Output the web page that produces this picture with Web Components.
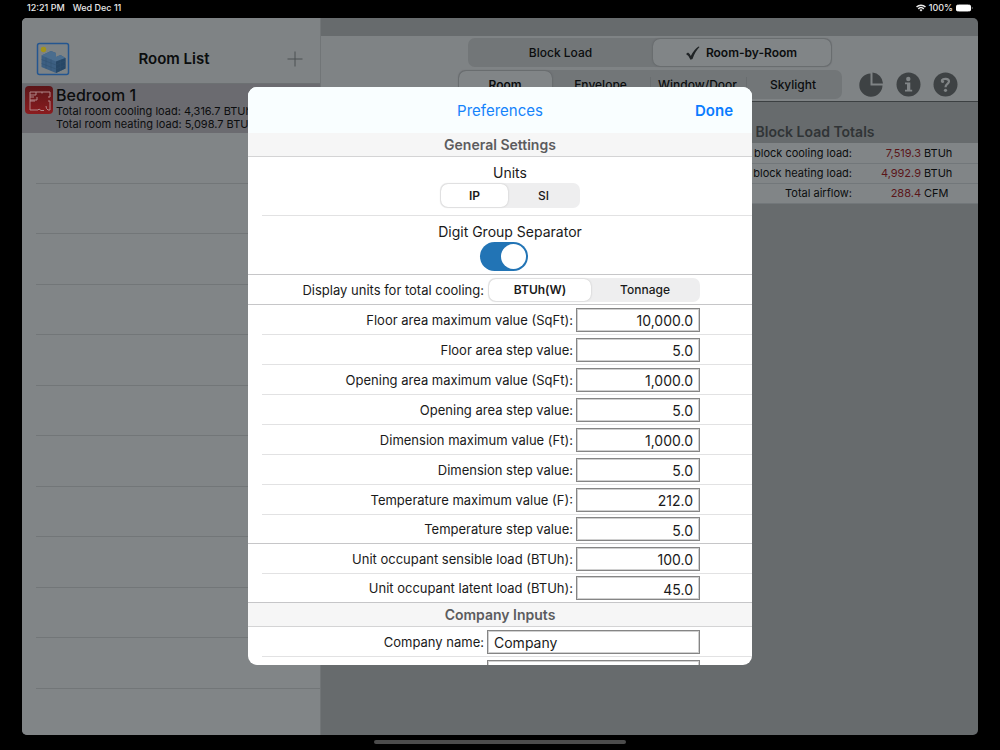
<!DOCTYPE html>
<html lang="en">
<head>
<meta charset="utf-8">
<title>Room List</title>
<style>
html, body { margin: 0; height: 100%; background: #000; }
body { font-family: Inter, "Liberation Sans", sans-serif; color: #0b0d0e; overflow: hidden; }
</style>
</head>
<body>
<load-app></load-app>

<template id="t-app">
<style>
:host { display: grid; grid-template-rows: 18px 1fr 15px; height: 100vh; position: relative; background: #000; }
main { display: grid; grid-template-columns: 299px 1fr; margin: 0 22px; border-radius: 5px; overflow: hidden; background: #676b6d; min-height: 0; }
.scrim { position: absolute; inset: 17px 22px 15px; display: grid; place-items: center; }
.home { width: 252px; height: 4px; border-radius: 2px; background: #4b4b4b; margin: 5px auto 0; }
</style>
<status-bar></status-bar>
<main>
  <room-list>
    <room-row name="Bedroom 1" cooling="4,316.7" heating="5,098.7"></room-row>
  </room-list>
  <detail-pane></detail-pane>
</main>
<div class="home"></div>
<div class="scrim"><prefs-dialog></prefs-dialog></div>
</template>

<template id="t-status">
<style>
:host { display: flex; align-items: center; gap: 8px; padding: 0 27px; color: #e8e8e8; font-size: 9px; font-weight: 500; line-height: 15px; height: 15px; }
.right { margin-left: auto; display: flex; align-items: center; gap: 3px; }
svg { display: block; }
</style>
<span>12:21 PM</span><span>Wed Dec 11</span>
<div class="right">
  <svg width="10" height="8" viewBox="0 0 20 16" fill="none" stroke="#eee" stroke-width="3"><path d="M1 6a13 13 0 0 1 18 0M4.500 9.700a8 8 0 0 1 11 0"/><path d="M10 15l-3-3.200a4.500 4.500 0 0 1 6 0z" fill="#eee" stroke="none"/></svg>
  <span>100%</span>
  <svg width="17" height="8" viewBox="0 0 17 8"><rect x=".5" y=".5" width="14" height="7" rx="2" fill="none" stroke="#777"/><rect x="0" y="1" width="15" height="6" rx="1.500" fill="#fff"/><path d="M15.800 2.800v2.400q1-.4 1-1.200t-1-1.200" fill="#777"/></svg>
</div>
</template>

<template id="t-list">
<style>
:host { display: flex; flex-direction: column; background: #818587; border-right: 1px solid #717577; overflow: hidden; min-height: 0; }
header { flex: none; display: grid; grid-template-columns: 34px 1fr 34px; align-items: end; box-sizing: border-box; height: 66px; padding: 0 8px 6px 14px; background: #7f8385; border-bottom: 1px solid #6c7072; }
h1 { margin: 0; font-size: 15px; line-height: 36px; font-weight: 600; text-align: center; }
button { border: 0; padding: 0; background: none; display: grid; place-items: center; height: 36px; }
svg { display: block; }
ul { list-style: none; margin: 0; padding: 0 0 0 14px; }
li { box-sizing: border-box; height: 50px; border-bottom: 1px solid #727678; }
li:nth-child(odd) { height: 51px; }
</style>
<header>
  <button aria-label="Building">
    <svg width="34" height="34" viewBox="0 0 34 34"><rect x="1.500" y="1.500" width="31" height="31" rx="2" fill="#7d8386" stroke="#245690" stroke-width="1.500"/><circle cx="7.500" cy="7.500" r="2.700" fill="#a29419"/><path d="M5.500 13.500L15 9l5 2v4l4.500-2 5 3v10.500L20 31 5.500 25z" fill="#3c5f82"/><path d="M5.500 13.500L15 9l5 2v4l4.500-2 5 3L20 19.500z" fill="#4a6d8e"/><path d="M20 19.500l9.500-3.500v10.500L20 31z" fill="#274766"/><path d="M5.500 17.500L20 23l9.500-4M5.500 21.500L20 27l9.500-4M10 15.500v11M15 17.500v11M24.500 18v11" stroke="#31506f" stroke-width=".5" fill="none"/></svg>
  </button>
  <h1>Room List</h1>
  <button aria-label="Add room"><svg width="16" height="16" viewBox="0 0 16 16" stroke="#4d5153" stroke-width="1"><path d="M8 .5v15M.5 8h15"/></svg></button>
</header>
<slot></slot>
<ul><li></li><li></li><li></li><li></li><li></li><li></li><li></li><li></li><li></li><li></li><li></li></ul>
</template>

<template id="t-row">
<style>
:host { flex: none; display: flex; gap: 3px; box-sizing: border-box; height: 49px; padding: 2px 0 0 3px; background: #6b6b70; white-space: nowrap; overflow: hidden; }
svg { flex: none; display: block; }
h2 { margin: 0; font-size: 16px; line-height: 19px; font-weight: 500; }
p { margin: 0; font-size: 11px; line-height: 13px; }
</style>
<svg width="28" height="28" viewBox="0 0 28 28"><defs><linearGradient id="g" x2="0" y2="1"><stop stop-color="#5b1518"/><stop offset="1" stop-color="#8b1c1f"/></linearGradient></defs><rect width="28" height="28" rx="4" fill="url(#g)"/><path d="M5 6h6v3H5zM5 9v5h7v-3M11 6h14v5M25 15v9h-2q-2-1-2-4M5 14v10h8l1-1 2 1.500h3M5 15h5M17 6v1.500M5 11h4M25 11h-2M25 15h-2" fill="none" stroke="#b08688" stroke-width="1"/></svg>
<div><h2></h2><p class="c"></p><p class="h"></p></div>
</template>

<template id="t-seg">
<style>
:host { display: block; }
fieldset { border: 0; margin: 0; min-width: 0; box-sizing: border-box; padding: 1px; display: grid; grid-template-columns: var(--cols, 1fr 1fr); height: var(--h, 24px); border-radius: var(--r, 7px); background: var(--track, #eeeeef); font-size: 12px; font-weight: 500; }
label { position: relative; display: flex; gap: 6px; align-items: center; justify-content: center; border-radius: inherit; min-width: 0; white-space: nowrap; }
label.on { background: var(--on, #fff); font-weight: 600; box-shadow: 0 0 2px var(--edge, #bbb); }
label.line::before { content: ""; position: absolute; left: 0; top: 6px; bottom: 6px; width: 1px; background: #696d6f; }
input { appearance: none; position: absolute; inset: 0; margin: 0; }
svg { display: block; }
</style>
<fieldset></fieldset>
</template>

<template id="t-detail">
<style>
:host { display: block; min-width: 0; }
.bar { margin-top: 18px; box-sizing: border-box; height: 66px; padding: 2px 0 0; background: #7f8385; border-bottom: 1px solid #3c4042; display: flex; flex-direction: column; align-items: center; gap: 3px; --track: #727678; --on: #818587; --edge: #515557; --h: 29px; }
.mode { width: 364px; --cols: 184px 1fr; }
.line { align-self: stretch; display: grid; grid-template-columns: 1fr 384px 1fr; }
.tabs { --cols: 93px 98px 96px 1fr; }
.icons { display: flex; align-items: center; justify-content: flex-end; gap: 12px; padding-right: 20px; }
button { border: 0; padding: 0; background: none; width: 25px; height: 25px; }
svg { display: block; }
h2 { margin: 0; padding-top: 18px; line-height: 23px; font-size: 14px; font-weight: 600; color: #303436; text-align: center; padding-left: 331px; }
table { width: 100%; border-collapse: collapse; background: #818587; font-size: 11px; table-layout: fixed; }
th { font-weight: 400; text-align: right; padding: 0; }
td { padding: 0; }
tr { height: 20px; border-bottom: 1px solid #72777a; }
td.v { width: 69px; text-align: right; color: #5b1519; }
td.u { width: 54px; padding-left: 3px; }
</style>
<div class="bar">
  <seg-control class="mode" name="mode" options="Block Load|Room-by-Room" selected="1" check></seg-control>
  <div class="line"><span></span>
    <seg-control class="tabs" name="tabs" options="Room|Envelope|Window/Door|Skylight" selected="0" divided></seg-control>
    <div class="icons">
      <button aria-label="Charts"><svg width="25" height="25" viewBox="0 0 25 25" fill="#3e4244"><path d="M11.500 1.500v12h12A11.600 11.600 0 1 1 11.500 1.500z"/><path d="M13.500 .5a11.500 11.500 0 0 1 10.500 11h-10.500z"/></svg></button>
      <button aria-label="Information"><svg width="25" height="25" viewBox="0 0 25 25"><circle cx="12.500" cy="12.500" r="12" fill="#3e4244"/><circle cx="12.300" cy="7" r="2.200" fill="#818587"/><path d="M9 10.500h5.300v7.300h1.900v1.700H9v-1.700h2v-5.600H9z" fill="#818587"/></svg></button>
      <button aria-label="Help"><svg width="25" height="25" viewBox="0 0 25 25"><circle cx="12.500" cy="12.500" r="12" fill="#3e4244"/><path d="M9 10V8c1-1.500 6.800-2 7 1.200.1 2.800-3.500 2.500-3.500 6" fill="none" stroke="#818587" stroke-width="2.200"/><circle cx="9.600" cy="9.500" r="1.500" fill="#818587"/><circle cx="12.500" cy="18.300" r="1.600" fill="#818587"/></svg></button>
    </div>
  </div>
</div>
<h2>Block Load Totals</h2>
<table>
  <tr><th scope="row">Total block cooling load:</th><td class="v">7,519.3</td><td class="u">BTUh</td></tr>
  <tr><th scope="row">Total block heating load:</th><td class="v">4,992.9</td><td class="u">BTUh</td></tr>
  <tr><th scope="row">Total airflow:</th><td class="v">288.4</td><td class="u">CFM</td></tr>
</table>
</template>

<template id="t-field">
<style>
:host { display: flex; align-items: center; justify-content: flex-end; gap: 3px; box-sizing: border-box; height: 30px; margin-left: 14px; padding-right: 52px; border-bottom: 1px solid #e2e2e3; font-size: 13px; color: #1a1a1a; }
:host([last]) { height: 29px; margin-left: 0; border-color: #c6c6c8; }
input { box-sizing: border-box; width: 124px; height: 24px; margin: 0; padding: 2px 6px 0; border: 1px solid #858585; box-shadow: inset 0 0 0 1px #d0d0d0; border-radius: 0; background: #fff; font: 14px Inter, sans-serif; color: #1a1a1a; text-align: right; outline: 0; }
:host([wide]) input { width: 213px; text-align: left; }
</style>
<label for="f"></label><input id="f" type="text">
</template>

<template id="t-switch">
<style>
:host { display: block; }
input { appearance: none; display: block; box-sizing: border-box; width: 48px; height: 29px; margin: 0; padding: 2px; border-radius: 15px; background: #d5d5d5; }
input::before { content: ""; display: block; width: 25px; height: 25px; border-radius: 50%; background: #fff; }
input:checked { background: #2274b5; }
input:checked::before { margin-left: auto; }
</style>
<input type="checkbox" checked aria-label="Digit Group Separator">
</template>

<template id="t-prefs">
<style>
:host { display: flex; flex-direction: column; width: min(504px, 100%); height: min(578px, 100%); border-radius: 9px; background: #fff; overflow: hidden; color: #1a1a1a; }
header { flex: none; display: grid; grid-template-columns: 1fr auto 1fr; align-items: center; height: 46px; padding: 0 19px; background: #f9feff; color: #1583fb; }
h1 { margin: 0; grid-column: 2; font-size: 15px; font-weight: 400; }
header button { justify-self: end; border: 0; padding: 0; background: none; font: 600 15px Inter, sans-serif; color: #0a7cff; }
.body { flex: 1; min-height: 0; overflow: hidden; }
h2 { margin: 0; box-sizing: border-box; height: 24px; line-height: 24px; background: #f6f6f6; border-bottom: 1px solid #d4d4d5; font-size: 14px; font-weight: 600; color: #5c5c5e; text-align: center; }
.stack { box-sizing: border-box; display: flex; flex-direction: column; align-items: center; height: 59px; padding: 5px 0 0 8px; font-size: 14px; line-height: 21px; border-bottom: 1px solid #c6c6c8; }
.stack > span { margin-left: 12px; }
.units { margin-left: 14px; padding-left: 6px; border-color: #e2e2e3; }
.units > span { margin-left: 0; }
.units seg-control { width: 140px; --h: 25px; --cols: 67px 1fr; }
.cool { box-sizing: border-box; display: flex; align-items: center; justify-content: flex-end; gap: 4px; height: 30px; padding-right: 52px; border-bottom: 1px solid #c6c6c8; font-size: 13px; }
.cool seg-control { width: 212px; --cols: 102px 1fr; }
</style>
<header><h1>Preferences</h1><button>Done</button></header>
<div class="body">
  <h2>General Settings</h2>
  <div class="stack units"><span>Units</span><seg-control name="units" options="IP|SI" selected="0"></seg-control></div>
  <div class="stack"><span>Digit Group Separator</span><toggle-switch></toggle-switch></div>
  <div class="cool"><span>Display units for total cooling:</span><seg-control name="cooling" options="BTUh(W)|Tonnage" selected="0"></seg-control></div>
  <pref-field label="Floor area maximum value (SqFt):" value="10,000.0"></pref-field>
  <pref-field label="Floor area step value:" value="5.0"></pref-field>
  <pref-field label="Opening area maximum value (SqFt):" value="1,000.0"></pref-field>
  <pref-field label="Opening area step value:" value="5.0"></pref-field>
  <pref-field label="Dimension maximum value (Ft):" value="1,000.0"></pref-field>
  <pref-field label="Dimension step value:" value="5.0"></pref-field>
  <pref-field label="Temperature maximum value (F):" value="212.0"></pref-field>
  <pref-field label="Temperature step value:" value="5.0" last></pref-field>
  <pref-field label="Unit occupant sensible load (BTUh):" value="100.0"></pref-field>
  <pref-field label="Unit occupant latent load (BTUh):" value="45.0" last></pref-field>
  <h2>Company Inputs</h2>
  <pref-field wide label="Company name:" value="Company"></pref-field>
  <pref-field wide label="" value=""></pref-field>
</div>
</template>

<script>
class Base extends HTMLElement {
  connectedCallback() {
    if (this.shadowRoot) return;
    const root = this.attachShadow({ mode: "open" });
    root.append(document.getElementById(this.constructor.tpl).content.cloneNode(true));
    this.fill(root);
  }
  fill() {}
}
const define = (name, tpl, fill) => {
  customElements.define(name, class extends Base {
    static tpl = tpl;
    fill(root) { if (fill) fill(this, root); }
  });
};
define("status-bar", "t-status");
define("room-list", "t-list");
define("room-row", "t-row", (el, root) => {
  root.querySelector("h2").textContent = el.getAttribute("name");
  root.querySelector(".c").textContent = `Total room cooling load: ${el.getAttribute("cooling")} BTUh`;
  root.querySelector(".h").textContent = `Total room heating load: ${el.getAttribute("heating")} BTUh`;
});
define("seg-control", "t-seg", (el, root) => {
  const set = root.querySelector("fieldset");
  const selected = Number(el.getAttribute("selected"));
  el.getAttribute("options").split("|").forEach((text, i) => {
    const label = document.createElement("label");
    if (el.hasAttribute("divided") && i > 1) label.classList.add("line");
    const input = document.createElement("input");
    input.type = "radio";
    input.name = el.getAttribute("name");
    input.checked = i === selected;
    label.append(input);
    if (i === selected) {
      label.classList.add("on");
      if (el.hasAttribute("check")) label.insertAdjacentHTML("beforeend",
        '<svg width="14" height="14" viewBox="0 0 14 14"><path d="M0 8l2-1.500q2 1 2.800 3.500Q8 3.500 12.500.5l1 .5Q9 5.500 6.500 13l-2 .8Q3 9.500 0 8z" fill="#202426"/></svg>');
    }
    const span = document.createElement("span");
    span.textContent = text;
    label.append(span);
    set.append(label);
  });
});
define("detail-pane", "t-detail");
define("pref-field", "t-field", (el, root) => {
  root.querySelector("label").textContent = el.getAttribute("label");
  root.querySelector("input").value = el.getAttribute("value");
});
define("toggle-switch", "t-switch");
define("prefs-dialog", "t-prefs");
define("load-app", "t-app");
</script>
</body>
</html>
